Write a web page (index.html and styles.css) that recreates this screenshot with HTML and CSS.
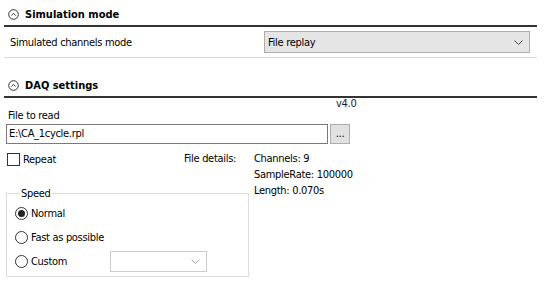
FILE: index.html
```html
<!DOCTYPE html>
<html>
<head>
<meta charset="utf-8">
<link rel="stylesheet" href="styles.css">
</head>
<body>
<div class="panel">
  <div class="sec-head first">
    <svg class="collapse" width="11" height="11" viewBox="0 0 11 11"><circle cx="5.5" cy="5.5" r="4.8" fill="none" stroke="#333" stroke-width="1"/><path d="M3.3 6.6 L5.5 4.4 L7.7 6.6" fill="none" stroke="#333" stroke-width="1"/></svg>
    <span class="sec-title">Simulation mode</span>
  </div>
  <div class="mode-row">
    <span class="mode-label">Simulated channels mode</span>
    <div class="combo">
      <span>File replay</span>
      <svg class="chev" width="9" height="5" viewBox="0 0 9 5"><path d="M0.5 0.5 L4.5 4.5 L8.5 0.5" fill="none" stroke="#444" stroke-width="1"/></svg>
    </div>
  </div>
  <div class="sec-head second">
    <svg class="collapse" width="11" height="11" viewBox="0 0 11 11"><circle cx="5.5" cy="5.5" r="4.8" fill="none" stroke="#333" stroke-width="1"/><path d="M3.3 6.6 L5.5 4.4 L7.7 6.6" fill="none" stroke="#333" stroke-width="1"/></svg>
    <span class="sec-title">DAQ settings</span>
  </div>
  <div class="daq">
    <div class="version-row"><span class="version">v4.0</span></div>
    <div class="file-label">File to read</div>
    <div class="file-row">
      <div class="textbox">E:\CA_1cycle.rpl</div>
      <div class="btn">...</div>
    </div>
    <div class="lower">
      <div class="left-col">
        <label class="check"><span class="box"></span>Repeat</label>
        <fieldset class="group">
          <legend>Speed</legend>
          <div class="radio-row"><span class="radio on"></span>Normal</div>
          <div class="radio-row"><span class="radio"></span>Fast as possible</div>
          <div class="radio-row custom"><span class="radio"></span><span class="custom-label">Custom</span>
            <div class="combo disabled">
              <svg class="chev" width="9" height="5" viewBox="0 0 9 5"><path d="M0.5 0.5 L4.5 4.5 L8.5 0.5" fill="none" stroke="#aaa" stroke-width="1"/></svg>
            </div>
          </div>
        </fieldset>
      </div>
      <div class="details">
        <span class="details-label">File details:</span>
        <div class="details-vals">
          <div>Channels: 9</div>
          <div>SampleRate: 100000</div>
          <div>Length: 0.070s</div>
        </div>
      </div>
    </div>
  </div>
</div>
</body>
</html>
```

FILE: styles.css
```css
html, body {
  margin: 0;
  padding: 0;
  background: #ffffff;
}
body {
  font-family: "DejaVu Sans Condensed", "DejaVu Sans", sans-serif;
  font-stretch: condensed;
  font-size: 11px;
  letter-spacing: -0.3px;
  color: #000;
  width: 545px;
  height: 284px;
  overflow: hidden;
}
*, *::before, *::after {
  box-sizing: border-box;
}
.panel {
  padding: 0 4px;
}
.sec-head {
  display: flex;
  align-items: flex-start;
  border-bottom: 2px solid #333;
  padding-left: 4px;
  margin-right: 4px;
}
.sec-head.first {
  height: 27px;
  padding-top: 8px;
}
.sec-head.second {
  height: 40px;
  padding-top: 21px;
}
.collapse {
  margin-right: 6px;
  margin-top: 1px;
  flex: none;
}
.sec-title {
  font-weight: bold;
  font-size: 11px;
  line-height: 13px;
  letter-spacing: 0;
}
.mode-row {
  display: flex;
  align-items: center;
  height: 31px;
  border-bottom: 1px solid #d9d9d9;
  margin-right: 4px;
  padding-left: 6px;
}
.mode-label {
  width: 254px;
}
.combo {
  background: #e5e5e5;
  border: 1px solid #adadad;
  display: flex;
  align-items: center;
  justify-content: space-between;
  padding: 0 6px 0 3px;
  width: 266px;
  height: 22px;
}
.combo.disabled {
  background: #fff;
  border-color: #cccccc;
  width: 97px;
  height: 21px;
  justify-content: flex-end;
}
.daq {
  padding-left: 2px;
}
.version-row {
  height: 12px;
  padding-left: 330px;
  line-height: 12px;
}
.version {
  color: #1b1b3a;
}
.file-label {
  height: 12px;
  line-height: 12px;
  padding-left: 2px;
}
.file-row {
  display: flex;
  gap: 2px;
  margin-top: 2px;
  height: 20px;
}
.textbox {
  width: 322px;
  height: 20px;
  border: 1px solid #7a7a7a;
  padding-left: 2px;
  line-height: 18px;
}
.btn {
  width: 20px;
  height: 20px;
  background: #e1e1e1;
  border: 1px solid #adadad;
  text-align: center;
  line-height: 17px;
}
.lower {
  display: flex;
  margin-top: 9px;
}
.left-col {
  width: 243px;
  flex: none;
}
.check {
  display: flex;
  align-items: center;
  height: 13px;
  padding-left: 1px;
}
.box {
  width: 13px;
  height: 13px;
  border: 1px solid #333;
  margin-right: 3px;
}
.group {
  margin: 21px 0 0 0;
  padding: 1px 0 0 8px;
  border: 1px solid #dcdcdc;
  width: 243px;
  height: 90px;
}
.group legend {
  padding: 0 1px;
  margin-left: 5px;
  line-height: 13px;
}
.radio-row {
  display: flex;
  align-items: center;
  height: 24px;
}
.radio {
  width: 13px;
  height: 13px;
  border: 1px solid #333;
  border-radius: 50%;
  margin-right: 3px;
  position: relative;
  flex: none;
}
.radio.on::after {
  content: "";
  position: absolute;
  left: 2px;
  top: 2px;
  width: 7px;
  height: 7px;
  border-radius: 50%;
  background: #222;
}
.custom-label {
  width: 79px;
}
.details {
  display: flex;
  margin-left: -65px;
  margin-top: -2px;
}
.details-label {
  width: 70px;
}
.details-vals div {
  height: 16px;
  line-height: 16px;
}
.details-label {
  line-height: 16px;
}
```
